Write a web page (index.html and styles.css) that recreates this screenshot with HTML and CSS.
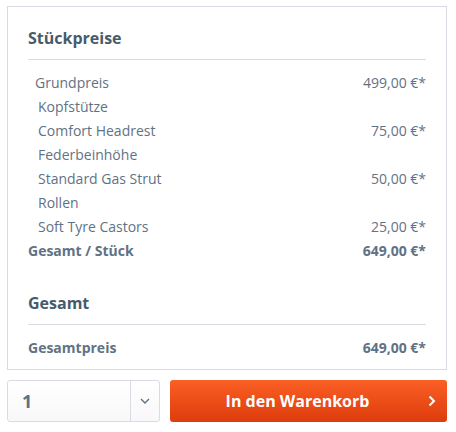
FILE: index.html
```html
<!DOCTYPE html>
<html lang="de">
<head>
    <meta charset="UTF-8">
    <meta name="viewport" content="width=device-width, initial-scale=1.0">
    <title>Stückpreise</title>
    <link rel="stylesheet" href="styles.css">
</head>
<body>
    <div class="price-box">
        <h3 class="price-title">Stückpreise</h3>
        <ul class="price-list">
            <li class="price-row base"><span>Grundpreis</span><span>499,00 €*</span></li>
            <li class="price-row option"><span>Kopfstütze</span></li>
            <li class="price-row option"><span>Comfort Headrest</span><span>75,00 €*</span></li>
            <li class="price-row option"><span>Federbeinhöhe</span></li>
            <li class="price-row option"><span>Standard Gas Strut</span><span>50,00 €*</span></li>
            <li class="price-row option"><span>Rollen</span></li>
            <li class="price-row option"><span>Soft Tyre Castors</span><span>25,00 €*</span></li>
            <li class="price-row sum"><span>Gesamt / Stück</span><span>649,00 €*</span></li>
        </ul>

        <h3 class="price-title second">Gesamt</h3>
        <ul class="price-list">
            <li class="price-row sum"><span>Gesamtpreis</span><span>649,00 €*</span></li>
        </ul>
    </div>

    <form class="buybox">
        <div class="quantity">
            <span class="quantity-value">1</span>
            <span class="quantity-arrow">
                <svg width="10" height="6" viewBox="0 0 10 6"><path d="M1 1l4 4 4-4" fill="none" stroke="#5f7285" stroke-width="1.4"/></svg>
            </span>
        </div>
        <button type="button" class="buy-btn">
            <span>In den Warenkorb</span>
            <svg class="buy-icon" width="8" height="12" viewBox="0 0 8 12"><path d="M1.5 1.5l4.5 4.5-4.5 4.5" fill="none" stroke="#fff" stroke-width="2"/></svg>
        </button>
    </form>
</body>
</html>
```

FILE: styles.css
```css
body {
    font-family: "Open Sans", sans-serif;
    margin: 0;
    padding: 6px 9px 0 7px;
    background-color: #fff;
    color: #5f7285;
}

.price-box {
    border: 1px solid #dadae5;
    padding: 0 20px 9px 20px;
}

.price-title {
    margin: 0;
    padding: 21px 0 11px;
    font-size: 16px;
    line-height: 20px;
    font-weight: 700;
    color: #475c6a;
    border-bottom: 1px solid #dadae5;
}

.price-title.second {
    padding-top: 30px;
}

.price-list {
    list-style: none;
    margin: 11px 0 0;
    padding: 0;
}

.price-row {
    display: flex;
    justify-content: space-between;
    font-size: 14px;
    line-height: 24px;
    height: 24px;
}

.price-row.base {
    padding-left: 7px;
}

.price-row.option {
    padding-left: 10px;
}

.price-row.sum {
    font-weight: 700;
}

.buybox {
    display: flex;
    gap: 10px;
    margin-top: 10px;
}

.quantity {
    display: flex;
    width: 151px;
    height: 40px;
    border: 1px solid #dadae5;
    border-radius: 3px;
    background: linear-gradient(to bottom, #fff 0%, #f8f8fa 100%);
}

.quantity-value {
    flex: 1;
    padding-left: 14px;
    font-size: 18px;
    font-weight: 700;
    line-height: 40px;
    color: #5f7285;
}

.quantity-arrow {
    width: 28px;
    border-left: 1px solid #dadae5;
    display: flex;
    align-items: center;
    justify-content: center;
}

.buy-btn {
    flex: 1;
    position: relative;
    height: 42px;
    border: none;
    border-radius: 3px;
    background: linear-gradient(to bottom, #fa5f24 0%, #dd3c0c 100%);
    color: #fff;
    font-family: "Open Sans", sans-serif;
    font-size: 16px;
    font-weight: 700;
    padding: 0 22px 0 0;
    cursor: pointer;
}

.buy-icon {
    position: absolute;
    right: 11px;
    top: 15px;
}
```
